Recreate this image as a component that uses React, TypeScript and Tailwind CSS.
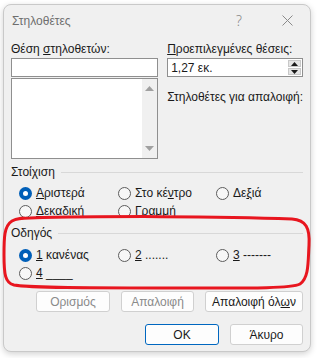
import React from "react";

const font = { fontFamily: '"Liberation Sans", "Noto Sans", "DejaVu Sans", sans-serif' };

function Radio({ checked, children }: { checked?: boolean; children: React.ReactNode }) {
  return (
    <div className="flex items-center gap-[4px] h-[18px]">
      {checked ? (
        <span className="w-[13px] h-[13px] rounded-full bg-[#005fb8] flex items-center justify-center shrink-0">
          <span className="w-[5px] h-[5px] rounded-full bg-white" />
        </span>
      ) : (
        <span className="w-[13px] h-[13px] rounded-full border border-[#5c5c5c] bg-[#f7f7f7] shrink-0" />
      )}
      <span className="text-[12px] text-[#1a1a1a] leading-none whitespace-nowrap">{children}</span>
    </div>
  );
}

function Btn({ children, disabled, primary, w }: { children: React.ReactNode; disabled?: boolean; primary?: boolean; w: string }) {
  return (
    <div
      className={`${w} h-[21px] rounded-[3px] flex items-center justify-center text-[12px] leading-none ${
        primary ? "border border-[#0067c0] bg-[#fdfdfd]" : "border border-[#d0d0d0] bg-[#fdfdfd]"
      } ${disabled ? "text-[#8a8a8a]" : "text-[#1a1a1a]"}`}
    >
      {children}
    </div>
  );
}

export default function App() {
  return (
    <div className="w-[320px] h-[358px] bg-white overflow-hidden relative" style={font}>
      <div className="ml-[3px] mt-[4px] w-[308px] h-[348px] rounded-[8px] border border-[#c9c9c9] bg-[#f0f0f0] shadow-[0_2px_6px_rgba(0,0,0,0.18)] flex flex-col">
        {/* Title bar */}
        <div className="h-[31px] flex items-center pl-[8px] pr-[17px] shrink-0">
          <span className="text-[12px] text-[#6e6e6e] flex-1">Στηλοθέτες</span>
          <span className="text-[14px] text-[#8a8a8a] mr-[40px]" style={{ fontFamily: '"Noto Sans", sans-serif', fontWeight: 300 }}>?</span>
          <svg width="11" height="11" viewBox="0 0 11 11">
            <path d="M0.5 0.5 L10.5 10.5 M10.5 0.5 L0.5 10.5" stroke="#8a8a8a" strokeWidth="1" />
          </svg>
        </div>

        <div className="px-[7px] flex flex-col">
          {/* Top two columns */}
          <div className="flex gap-[9px] mt-[5px]">
            <div className="w-[152px] flex flex-col">
              <div className="text-[12px] text-[#1a1a1a] leading-[16px] h-[16px] whitespace-nowrap">
                Θέση <span className="underline">σ</span>τηλοθετών:
              </div>
              <div className="mt-[1px] h-[19px] bg-white border border-[#8f8f8f]" />
              <div className="mt-[1px] h-[81px] bg-white border border-[#8f8f8f] flex justify-end">
                <div className="w-[15px] bg-[#f0f0f0] flex flex-col items-center justify-between py-[7px]">
                  <svg width="9" height="5" viewBox="0 0 9 5"><path d="M0 5 L4.5 0 L9 5 Z" fill="#a0a0a0" /></svg>
                  <svg width="9" height="5" viewBox="0 0 9 5"><path d="M0 0 L4.5 5 L9 0 Z" fill="#a0a0a0" /></svg>
                </div>
              </div>
            </div>
            <div className="flex-1 flex flex-col">
              <div className="text-[12px] text-[#1a1a1a] leading-[16px] h-[16px] whitespace-nowrap">
                <span className="underline">Π</span>ροεπιλεγμένες θέσεις:
              </div>
              <div className="mt-[1px] h-[19px] bg-white border border-[#8f8f8f] flex items-center">
                <span className="flex-1 pl-[3px] text-[12px] text-[#1a1a1a] leading-none">1,27 εκ.</span>
                <div className="w-[15px] h-full flex flex-col gap-[1px] p-[1px]">
                  <div className="flex-1 bg-[#e5e5e5] border border-[#c8c8c8] flex items-center justify-center">
                    <svg width="7" height="4" viewBox="0 0 7 4"><path d="M0 4 L3.5 0 L7 4 Z" fill="#1a1a1a" /></svg>
                  </div>
                  <div className="flex-1 bg-[#e5e5e5] border border-[#c8c8c8] flex items-center justify-center">
                    <svg width="7" height="4" viewBox="0 0 7 4"><path d="M0 0 L3.5 4 L7 0 Z" fill="#1a1a1a" /></svg>
                  </div>
                </div>
              </div>
              <div className="mt-[12px] text-[12px] text-[#1a1a1a] leading-[16px] whitespace-nowrap">Στηλοθέτες για απαλοιφή:</div>
            </div>
          </div>

          {/* Alignment */}
          <div className="mt-[5px] flex items-center gap-[6px] h-[16px]">
            <span className="text-[12px] text-[#1a1a1a] leading-none">Στοίχιση</span>
            <div className="flex-1 h-px bg-[#d8d8d8]" />
          </div>
          <div className="mt-[4px] pl-[8px] grid grid-cols-[99px_98px_1fr]">
            <Radio checked><span className="underline">Α</span>ριστερά</Radio>
            <Radio>Στο κέ<span className="underline">ν</span>τρο</Radio>
            <Radio>Δε<span className="underline">ξ</span>ιά</Radio>
            <Radio><span className="underline">Δ</span>εκαδική</Radio>
            <Radio><span className="underline">Γ</span>ραμμή</Radio>
          </div>

          {/* Leader */}
          <div className="mt-[5px] flex items-center gap-[6px] h-[16px]">
            <span className="text-[12px] text-[#1a1a1a] leading-none">Οδηγός</span>
            <div className="flex-1 h-px bg-[#d8d8d8]" />
          </div>
          <div className="mt-[5px] pl-[8px] grid grid-cols-[99px_98px_1fr]">
            <Radio checked><span className="underline">1</span> κανένας</Radio>
            <Radio><span className="underline">2</span> .......</Radio>
            <Radio><span className="underline">3</span> -------</Radio>
            <Radio><span className="underline">4</span> ____</Radio>
          </div>

          {/* Buttons */}
          <div className="mt-[9px] flex justify-end gap-[11px]">
            <Btn w="w-[74px]" disabled>Ορισμός</Btn>
            <Btn w="w-[73px]" disabled>Απαλοιφή</Btn>
            <Btn w="w-[98px]">Απαλοιφή όλ<span className="underline">ω</span>ν</Btn>
          </div>
          <div className="mt-[12px] flex justify-end gap-[11px]">
            <Btn w="w-[74px]" primary>OK</Btn>
            <Btn w="w-[73px]">Άκυρο</Btn>
          </div>
        </div>
      </div>

      {/* Red annotation outline */}
      <svg className="absolute left-0 top-0 pointer-events-none" width="320" height="358" viewBox="0 0 320 358">
        <path
          d="M30 218 C 100 216, 220 216, 292 219 C 306 220, 310 228, 309 245 C 308 262, 309 278, 300 284 C 290 289, 240 288, 160 288 C 90 288, 30 288, 14 285 C 5 283, 4 274, 4 255 C 4 238, 4 226, 12 221 C 17 218, 22 218, 30 218 Z"
          fill="none"
          stroke="#e8161f"
          strokeWidth="3"
        />
      </svg>
    </div>
  );
}
